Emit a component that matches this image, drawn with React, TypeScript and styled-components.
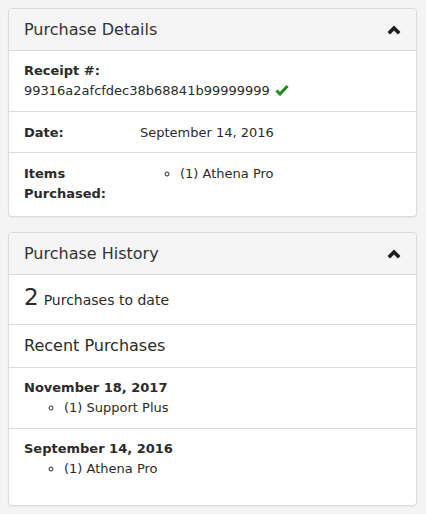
import React, {FC} from 'react';
import styled, {createGlobalStyle} from 'styled-components';

const GlobalStyle = createGlobalStyle`
    body {
        margin: 0;
        background: #f4f4f4;
        font-family: "DejaVu Sans", "Open Sans", sans-serif;
        color: #2b2b2b;
    }
`;

const Page = styled.div`
    padding: 8px 9px 8px 8px;
    display: flex;
    flex-direction: column;
    gap: 15px;
`;
const Card = styled.section`
    background: #fff;
    border: 1px solid #dcdcdc;
    border-radius: 4px;
    box-shadow: 0 1px 2px rgba(0, 0, 0, 0.06);
    overflow: hidden;
`;
const CardHeader = styled.header`
    display: flex;
    align-items: center;
    justify-content: space-between;
    height: 41px;
    padding: 0 15px;
    background: #f5f5f6;
    border-bottom: 1px solid #dcdcdc;
    font-size: 16px;
    color: #333;
`;
const Row = styled.div<{$pad?: string}>`
    padding: ${p => p.$pad || '10px 15px'};
    font-size: 13px;
    line-height: 20px;
    &:not(:last-child) {
        border-bottom: 1px solid #dcdcdc;
    }
`;
const Pair = styled(Row)`
    display: grid;
    grid-template-columns: 116px 1fr;
`;
const Label = styled.div`
    font-weight: bold;
`;
const Check = styled.svg`
    margin-left: 5px;
    vertical-align: -1px;
`;
const Items = styled.ul<{$indent: number}>`
    margin: 0;
    padding-left: ${p => p.$indent}px;
    list-style: circle;
`;
const Big = styled.span`
    font-size: 23px;
    line-height: 1;
    margin-right: 5px;
`;
const Count = styled(Row)`
    font-size: 14px;
    line-height: 28px;
    height: 28px;
`;
const Plain = styled(Row)`
    font-size: 16px;
    line-height: 22px;
`;

const Chevron: FC = () => (
    <svg width="14" height="10" viewBox="0 0 14 10">
        <path d="M1.8 8.2 L7 3 L12.2 8.2" fill="none" stroke="#1e1e1e" strokeWidth="3.6" />
    </svg>
);

const history = [
    {date: 'November 18, 2017', item: '(1) Support Plus'},
    {date: 'September 14, 2016', item: '(1) Athena Pro'},
];

const App: FC = () => (
    <Page>
        <GlobalStyle />
        <Card>
            <CardHeader>Purchase Details<Chevron /></CardHeader>
            <Row $pad="10px 15px 10px">
                <Label>Receipt #:</Label>
                <div>
                    99316a2afcfdec38b68841b99999999
                    <Check width="14" height="12" viewBox="0 0 14 12">
                        <path d="M1.5 6.5 L5 10 L12.5 2" fill="none" stroke="#1d8a1d" strokeWidth="3" />
                    </Check>
                </div>
            </Row>
            <Pair $pad="11px 15px 9px">
                <Label>Date:</Label>
                <div>September 14, 2016</div>
            </Pair>
            <Pair $pad="11px 15px 12px">
                <Label>Items<br />Purchased:</Label>
                <Items $indent={40}><li>(1) Athena Pro</li></Items>
            </Pair>
        </Card>
        <Card>
            <CardHeader>Purchase History<Chevron /></CardHeader>
            <Count $pad="11px 15px 10px"><Big>2</Big>Purchases to date</Count>
            <Plain $pad="10px 15px 10px">Recent Purchases</Plain>
            {history.map((h, i) => (
                <Row key={i} $pad={i === history.length - 1 ? '10px 15px 26px' : '10px 15px'}>
                    <Label>{h.date}</Label>
                    <Items $indent={40}><li>{h.item}</li></Items>
                </Row>
            ))}
        </Card>
    </Page>
);

export default App;
